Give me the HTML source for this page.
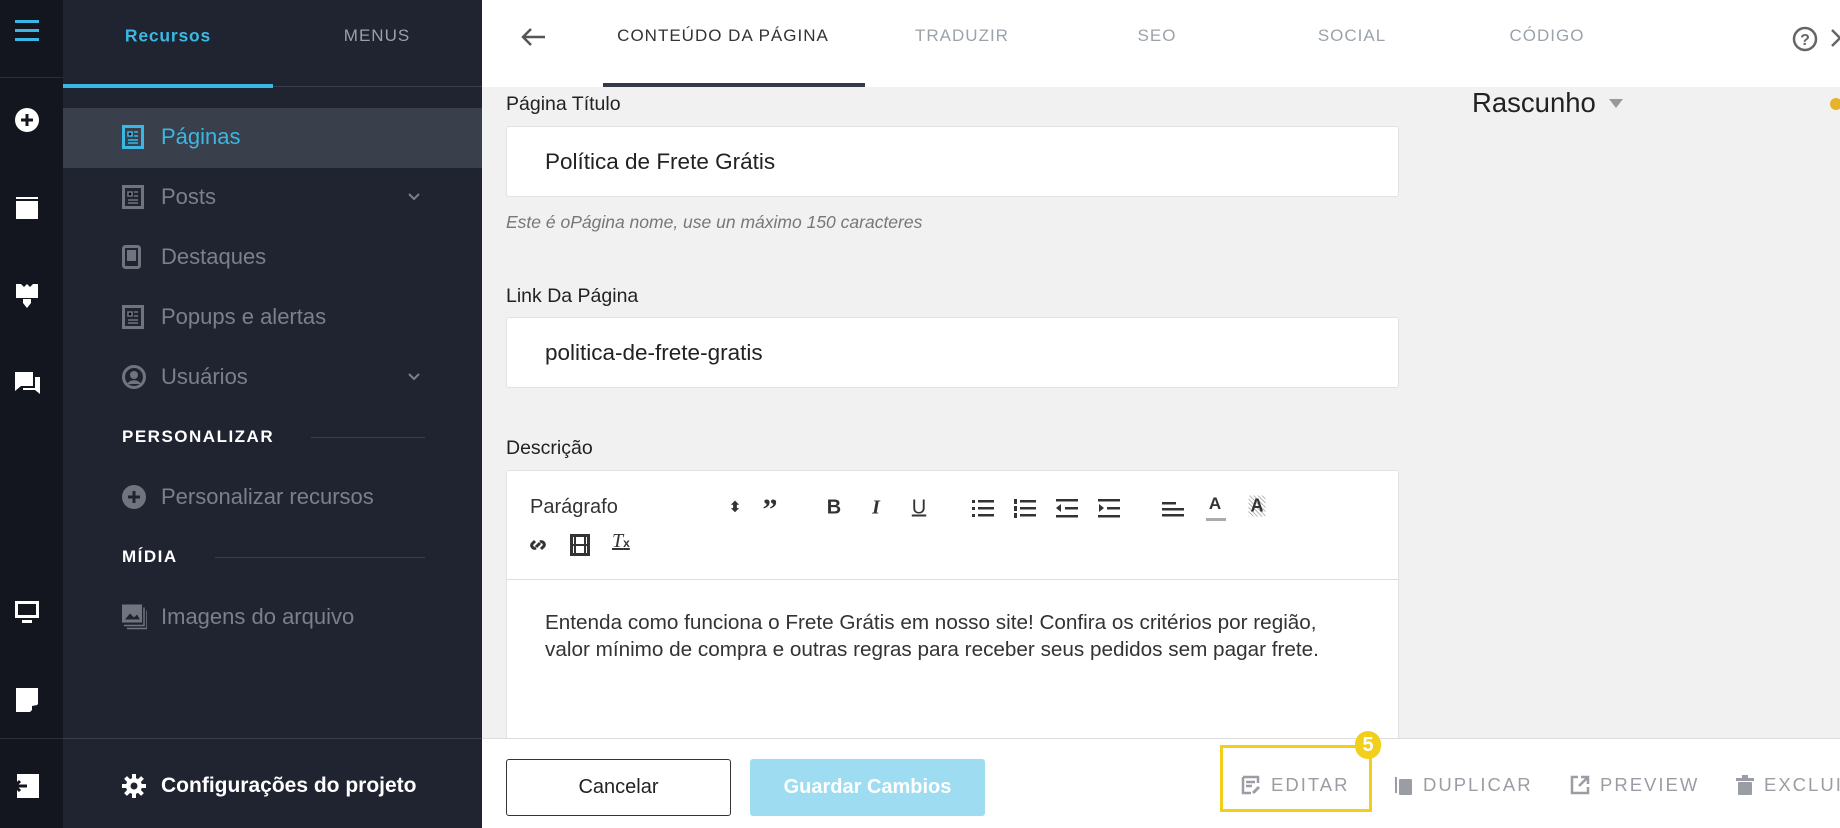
<!DOCTYPE html>
<html><head><meta charset="utf-8"><style>
*{box-sizing:border-box;margin:0;padding:0}
body{width:1840px;height:828px;overflow:hidden;position:relative;font-family:"Liberation Sans",sans-serif;background:#f1f1f1}
.a{position:absolute}
.rail{left:0;top:0;width:63px;height:828px;background:#13161f}
.side{left:63px;top:0;width:419px;height:828px;background:#1f2430}
.it{position:absolute;left:161px;font-size:22px;color:#7b808a;transform:translateY(-50%)}
.ic{position:absolute;left:122px;transform:translateY(-50%)}
.sec{position:absolute;left:122px;font-size:17px;font-weight:bold;color:#fff;letter-spacing:1.5px;transform:translateY(-50%)}
.tab{position:absolute;top:36px;transform:translate(-50%,-50%);font-size:17px;letter-spacing:1px;color:#9aa3ab}
.lbl{position:absolute;left:506px;font-size:19.5px;color:#222}
.inp{position:absolute;left:506px;width:893px;background:#fff;border:1px solid #e2e2e2;border-radius:3px;font-size:22.5px;color:#222;padding-left:38px;display:flex;align-items:center}
.tb{position:absolute;font-size:20px;color:#333;transform:translate(-50%,-50%);font-weight:bold}
.act{position:absolute;top:785px;transform:translateY(-50%);font-size:18.5px;letter-spacing:2px;color:#9a9ea4;display:flex;align-items:center;gap:10px}
</style></head><body>
<div class="a rail"></div>
<div class="a" style="left:0;top:77px;width:63px;height:1px;background:#2a2e38"></div>
<div class="a" style="left:0;top:738px;width:63px;height:1px;background:#2a2e38"></div>
<svg class="a" style="left:15px;top:20px" width="24" height="22"><rect y="0" width="24" height="3" fill="#3bb7e3"/><rect y="9" width="24" height="3" fill="#3bb7e3"/><rect y="18" width="24" height="3" fill="#3bb7e3"/></svg>
<svg class="a" style="left:15px;top:108px" width="24" height="24"><circle cx="12" cy="12" r="12" fill="#fff"/><path d="M12 6v12M6 12h12" stroke="#13161f" stroke-width="3"/></svg>
<svg class="a" style="left:16px;top:197px" width="22" height="22"><rect y="0" width="22" height="2" fill="#fff"/><rect y="4" width="22" height="18" fill="#fff"/></svg>
<svg class="a" style="left:16px;top:284px" width="22" height="25"><path d="M0 0h5l3 3 3-3 3 3 3-3h5v14H0z M7 15h8v4l-4 5-4-5z" fill="#fff"/></svg>
<svg class="a" style="left:15px;top:372px" width="25" height="25"><path d="M0 0h18v14H6l-6 5z" fill="#fff"/><path d="M20 5h5v17l-5-4H8v-2h12z" fill="#fff"/></svg>
<svg class="a" style="left:15px;top:601px" width="24" height="24"><rect x="0" y="0" width="24" height="17" fill="#fff"/><rect x="3" y="3" width="18" height="11" fill="#13161f"/><rect x="7" y="19" width="10" height="3" fill="#fff"/></svg>
<svg class="a" style="left:16px;top:688px" width="22" height="24"><path d="M0 0h22v16l-8 8H0z" fill="#fff"/><path d="M16 18l5-1-5 6z" fill="#13161f"/></svg>
<svg class="a" style="left:15px;top:774px" width="24" height="24"><rect x="2" y="0" width="22" height="24" fill="#fff"/><path d="M0 12h12M5 7l-5 5 5 5" stroke="#13161f" stroke-width="3" fill="none"/></svg>
<div class="a side"></div>
<div class="a" style="left:63px;top:0;width:419px;height:87px;background:#1f2430;border-bottom:1px solid #3a3f4c"></div>
<div class="a" style="left:63px;top:84px;width:210px;height:4px;background:#3bb7e3"></div>
<div class="a" style="left:168px;top:36px;transform:translate(-50%,-50%);font-size:17.5px;color:#3bb7e3;letter-spacing:.8px;font-weight:bold">Recursos</div>
<div class="a" style="left:377px;top:36px;transform:translate(-50%,-50%);font-size:17px;color:#9aa0a8;letter-spacing:1px">MENUS</div>
<div class="a" style="left:63px;top:108px;width:419px;height:60px;background:#3a3f4c"></div>
<svg class="ic" style="top:137px" width="22" height="24"><rect x="1.5" y="1.5" width="19" height="21" fill="none" stroke="#3bb7e3" stroke-width="3"/><path d="M6 7h4v4H6zM12 7h4M12 11h4M6 15h10M6 18h10" stroke="#3bb7e3" stroke-width="1.6"/></svg>
<div class="it" style="top:137px;color:#3bb7e3">Páginas</div>
<svg class="ic" style="top:197px" width="22" height="24"><rect x="1.5" y="1.5" width="19" height="21" fill="none" stroke="#6f747e" stroke-width="3"/><path d="M6 7h4v4H6zM12 7h4M12 11h4M6 15h10M6 18h10" stroke="#6f747e" stroke-width="1.6"/></svg>
<div class="it" style="top:197px">Posts</div>
<svg class="a" style="left:407px;top:192px" width="14" height="10"><path d="M2 2l5 5 5-5" stroke="#7b808a" stroke-width="2" fill="none"/></svg>
<svg class="ic" style="top:257px" width="20" height="24"><rect x="1.5" y="1.5" width="16" height="21" rx="2" fill="none" stroke="#6f747e" stroke-width="3"/><rect x="5" y="5" width="9" height="11" fill="#6f747e"/></svg>
<div class="it" style="top:257px">Destaques</div>
<svg class="ic" style="top:317px" width="22" height="24"><rect x="1.5" y="1.5" width="19" height="21" fill="none" stroke="#6f747e" stroke-width="3"/><path d="M6 7h4v4H6zM12 7h4M12 11h4M6 15h10M6 18h10" stroke="#6f747e" stroke-width="1.6"/></svg>
<div class="it" style="top:317px">Popups e alertas</div>
<svg class="ic" style="top:377px" width="24" height="24"><circle cx="12" cy="12" r="10.5" fill="none" stroke="#6f747e" stroke-width="3"/><circle cx="12" cy="10" r="4" fill="#6f747e"/><path d="M5 19c3-5 11-5 14 0" fill="#6f747e"/></svg>
<div class="it" style="top:377px">Usuários</div>
<svg class="a" style="left:407px;top:372px" width="14" height="10"><path d="M2 2l5 5 5-5" stroke="#7b808a" stroke-width="2" fill="none"/></svg>
<div class="sec" style="top:437px">PERSONALIZAR</div>
<div class="a" style="left:311px;top:437px;width:114px;height:1px;background:#3a3f4c"></div>
<svg class="ic" style="top:497px" width="24" height="24"><circle cx="12" cy="12" r="12" fill="#6f747e"/><path d="M12 6v12M6 12h12" stroke="#1f2430" stroke-width="3"/></svg>
<div class="it" style="top:497px">Personalizar recursos</div>
<div class="sec" style="top:557px">MÍDIA</div>
<div class="a" style="left:215px;top:557px;width:210px;height:1px;background:#3a3f4c"></div>
<svg class="ic" style="top:617px" width="25" height="25"><rect x="0" y="0" width="20" height="18" fill="#6f747e"/><path d="M3 15l5-6 4 4 3-3 3 5z" fill="#1f2430"/><path d="M2 21h20V3M5 24h20V6" stroke="#6f747e" stroke-width="1.5" fill="none"/></svg>
<div class="it" style="top:617px">Imagens do arquivo</div>
<div class="a" style="left:63px;top:738px;width:419px;height:1px;background:#3a3f4c"></div>
<svg class="ic" style="top:786px" width="24" height="24"><g fill="#fff"><circle cx="12" cy="12" r="8"/><rect x="10" y="0" width="4" height="24"/><rect x="0" y="10" width="24" height="4"/><rect x="10" y="0" width="4" height="24" transform="rotate(45 12 12)"/><rect x="10" y="0" width="4" height="24" transform="rotate(-45 12 12)"/></g><circle cx="12" cy="12" r="3.5" fill="#1f2430"/></svg>
<div class="it" style="top:786px;color:#fff;font-weight:bold;font-size:21px">Configurações do projeto</div>
<div class="a" style="left:482px;top:0;width:1358px;height:87px;background:#fff"></div>
<svg class="a" style="left:520px;top:27px" width="26" height="20"><path d="M25 10H3M11 2L3 10l8 8" stroke="#555" stroke-width="2.5" fill="none"/></svg>
<div class="tab" style="left:723px;color:#333">CONTEÚDO DA PÁGINA</div>
<div class="a" style="left:603px;top:83px;width:262px;height:4px;background:#333a48"></div>
<div class="tab" style="left:962px">TRADUZIR</div>
<div class="tab" style="left:1157px">SEO</div>
<div class="tab" style="left:1352px">SOCIAL</div>
<div class="tab" style="left:1547px">CÓDIGO</div>
<svg class="a" style="left:1792px;top:26px" width="26" height="26"><circle cx="13" cy="13" r="11" fill="none" stroke="#666" stroke-width="2.5"/><text x="13" y="19" font-size="16" font-weight="bold" fill="#666" text-anchor="middle" font-family="Liberation Sans">?</text></svg>
<svg class="a" style="left:1830px;top:28px" width="12" height="20"><path d="M2 2l16 16M18 2L2 18" stroke="#666" stroke-width="2.5"/></svg>
<div class="lbl" style="top:93px">Página Título</div>
<div class="inp" style="top:126px;height:71px">Política de Frete Grátis</div>
<div class="a" style="left:506px;top:212px;font-size:17.5px;font-style:italic;color:#777">Este é oPágina nome, use un máximo 150 caracteres</div>
<div class="lbl" style="top:285px">Link Da Página</div>
<div class="inp" style="top:317px;height:71px">politica-de-frete-gratis</div>
<div class="lbl" style="top:437px">Descrição</div>
<div class="a" style="left:506px;top:470px;width:893px;height:300px;background:#fff;border:1px solid #e2e2e2;border-radius:3px"></div>
<div class="a" style="left:507px;top:579px;width:891px;height:1px;background:#ddd"></div>
<div class="a" style="left:530px;top:496px;font-size:20px;color:#333">Parágrafo</div>
<div class="tb" style="left:735px;top:507px;font-size:14px">⬍</div>
<div class="tb" style="left:770px;top:510px;font-size:30px;font-family:'Liberation Serif'">”</div>
<div class="tb" style="left:834px;top:508px">B</div>
<div class="tb" style="left:876px;top:508px;font-style:italic;font-family:'Liberation Serif'">I</div>
<div class="tb" style="left:919px;top:508px;text-decoration:underline;font-weight:normal">U</div>
<svg class="a" style="left:972px;top:498px" width="22" height="20"><g fill="#333"><rect x="0" y="2" width="3" height="3"/><rect x="0" y="9" width="3" height="3"/><rect x="0" y="16" width="3" height="3"/><rect x="6" y="2" width="16" height="2.5"/><rect x="6" y="9" width="16" height="2.5"/><rect x="6" y="16" width="16" height="2.5"/></g></svg>
<svg class="a" style="left:1014px;top:498px" width="22" height="20"><g fill="#333"><rect x="0" y="1" width="3" height="5"/><rect x="0" y="8" width="3" height="5"/><rect x="0" y="15" width="3" height="5"/><rect x="6" y="2" width="16" height="2.5"/><rect x="6" y="9" width="16" height="2.5"/><rect x="6" y="16" width="16" height="2.5"/></g></svg>
<svg class="a" style="left:1056px;top:498px" width="22" height="20"><g fill="#333"><rect x="0" y="1" width="22" height="2.5"/><rect x="9" y="9" width="13" height="2.5"/><rect x="0" y="17" width="22" height="2.5"/><path d="M0 10l5-4v8z"/></g></svg>
<svg class="a" style="left:1098px;top:498px" width="22" height="20"><g fill="#333"><rect x="0" y="1" width="22" height="2.5"/><rect x="9" y="9" width="13" height="2.5"/><rect x="0" y="17" width="22" height="2.5"/><path d="M6 10l-5-4v8z"/></g></svg>
<svg class="a" style="left:1162px;top:498px" width="22" height="20"><g fill="#333"><rect x="0" y="4" width="14" height="2.5"/><rect x="0" y="10" width="22" height="2.5"/><rect x="0" y="16" width="22" height="2.5"/></g></svg>
<div class="tb" style="left:1215px;top:504px;font-size:17px">A</div>
<div class="a" style="left:1206px;top:518px;width:20px;height:3px;background:#aaa"></div>
<div class="tb" style="left:1257px;top:506px;font-size:18px;background:repeating-linear-gradient(45deg,#bbb 0 1px,#fff 1px 3px);padding:0 2px">A</div>
<svg class="a" style="left:527px;top:534px" width="22" height="22"><path d="M9 13l4-4M8 7l-3 3a3 3 0 004 4M14 15l3-3a3 3 0 00-4-4" stroke="#333" stroke-width="3" fill="none"/></svg>
<svg class="a" style="left:570px;top:534px" width="20" height="22"><rect x="1.5" y="1.5" width="17" height="19" fill="none" stroke="#333" stroke-width="3"/><rect x="5" y="1" width="10" height="20" fill="none" stroke="#333" stroke-width="2"/><rect x="1" y="10" width="18" height="2" fill="#333"/></svg>
<div class="a" style="left:612px;top:530px;font-size:20px;font-style:italic;font-family:'Liberation Serif';color:#333;text-decoration:underline">T<span style="font-size:12px;font-style:normal;font-weight:bold;font-family:'Liberation Sans'">x</span></div>
<div class="a" style="left:545px;top:609px;font-size:20.7px;color:#333;line-height:27px">Entenda como funciona o Frete Grátis em nosso site! Confira os critérios por região,<br>valor mínimo de compra e outras regras para receber seus pedidos sem pagar frete.</div>
<div class="a" style="left:1472px;top:87px;font-size:27.5px;color:#222">Rascunho</div>
<svg class="a" style="left:1609px;top:99px" width="14" height="10"><path d="M0 0h14L7 9z" fill="#999"/></svg>
<div class="a" style="left:1830px;top:98px;width:12px;height:12px;border-radius:6px;background:#e6b32a"></div>
<div class="a" style="left:482px;top:738px;width:1358px;height:90px;background:#fff;border-top:1px solid #ddd"></div>
<div class="a" style="left:506px;top:759px;width:225px;height:57px;border:1px solid #333;border-radius:3px;background:#fff;display:flex;align-items:center;justify-content:center;font-size:20px;color:#222">Cancelar</div>
<div class="a" style="left:750px;top:759px;width:235px;height:57px;border-radius:3px;background:#9edcf1;display:flex;align-items:center;justify-content:center;font-size:20px;color:#fff;font-weight:bold">Guardar Cambios</div>
<div class="a" style="left:1220px;top:745px;width:152px;height:67px;border:3px solid #f2cf1a"></div>
<div class="a" style="left:1355px;top:731px;width:26px;height:28px;border-radius:13px;background:#f2cf1a;color:#fff;font-weight:bold;font-size:20px;text-align:center;line-height:28px">5</div>
<div class="act" style="left:1241px"><svg width="20" height="20"><path d="M2 2h15v6M2 2v16h8M5 7h9M5 11h6" stroke="#9a9ea4" stroke-width="2.5" fill="none"/><path d="M12 18l6-6" stroke="#9a9ea4" stroke-width="3"/></svg>EDITAR</div>
<div class="act" style="left:1395px"><svg width="18" height="20"><path d="M1 2v16" stroke="#9a9ea4" stroke-width="2"/><rect x="4" y="4" width="13" height="16" rx="1" fill="#9a9ea4"/></svg>DUPLICAR</div>
<div class="act" style="left:1570px"><svg width="20" height="20"><path d="M8 2H2v16h16v-6M11 2h7v7M18 2l-9 9" stroke="#9a9ea4" stroke-width="2.5" fill="none"/></svg>PREVIEW</div>
<div class="act" style="left:1736px"><svg width="18" height="20"><rect x="0" y="3" width="18" height="3" fill="#9a9ea4"/><rect x="6" y="0" width="6" height="3" fill="#9a9ea4"/><rect x="2" y="7" width="14" height="13" rx="1" fill="#9a9ea4"/></svg>EXCLUI</div>
</body></html>
